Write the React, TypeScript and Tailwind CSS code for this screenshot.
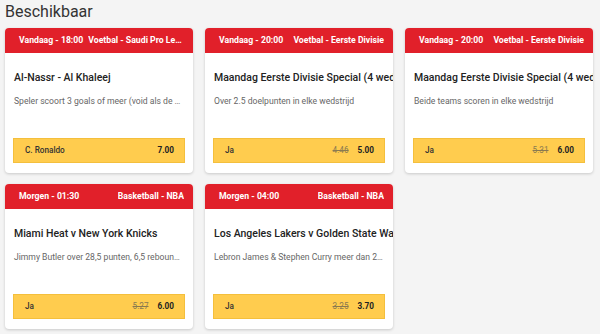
import React from "react";

type Card = {
  time: string;
  league: string;
  title: string;
  desc: string;
  label: string;
  old?: string;
  odds: string;
};

const cards: Card[] = [
  {
    time: "Vandaag - 18:00",
    league: "Voetbal - Saudi Pro League",
    title: "Al-Nassr - Al Khaleej",
    desc: "Speler scoort 3 goals of meer (void als de speler niet start)",
    label: "C. Ronaldo",
    odds: "7.00",
  },
  {
    time: "Vandaag - 20:00",
    league: "Voetbal - Eerste Divisie",
    title: "Maandag Eerste Divisie Special (4 wedstrijden)",
    desc: "Over 2.5 doelpunten in elke wedstrijd",
    label: "Ja",
    old: "4.46",
    odds: "5.00",
  },
  {
    time: "Vandaag - 20:00",
    league: "Voetbal - Eerste Divisie",
    title: "Maandag Eerste Divisie Special (4 wedstrijden)",
    desc: "Beide teams scoren in elke wedstrijd",
    label: "Ja",
    old: "5.31",
    odds: "6.00",
  },
  {
    time: "Morgen - 01:30",
    league: "Basketball - NBA",
    title: "Miami Heat v New York Knicks",
    desc: "Jimmy Butler over 28,5 punten, 6,5 rebounds en 4,5 assists",
    label: "Ja",
    old: "5.27",
    odds: "6.00",
  },
  {
    time: "Morgen - 04:00",
    league: "Basketball - NBA",
    title: "Los Angeles Lakers v Golden State Warriors",
    desc: "Lebron James & Stephen Curry meer dan 25 punten",
    label: "Ja",
    old: "3.25",
    odds: "3.70",
  },
];

function BetCard({ c }: { c: Card }) {
  return (
    <div className="flex h-[145px] flex-col overflow-hidden rounded-[4px] bg-white shadow-[0_1px_3px_rgba(0,0,0,0.18)]">
      <div className="flex h-[25px] shrink-0 items-center justify-between gap-[5px] bg-[#e1202a] pl-[14px] pr-[9px] text-[8.7px] font-bold text-white">
        <span className="shrink-0 whitespace-nowrap">{c.time}</span>
        <span className="min-w-0 truncate">{c.league}</span>
      </div>
      <div className="overflow-hidden whitespace-nowrap pl-[9px] pr-[5px] pt-[18px] text-[10.5px] font-medium leading-[14px] text-[#222]">
        {c.title}
      </div>
      <div className="truncate pl-[9px] pr-[9px] pt-[10px] text-[8.6px] leading-[12px] text-[#666]">
        {c.desc}
      </div>
      <div className="mx-[8px] mb-[10px] mt-auto flex h-[25px] items-center justify-between border border-[#f4bf3c] bg-[#ffcc4e] pl-[11px] pr-[10px] text-[8.2px] text-[#333]">
        <span className="font-medium">{c.label}</span>
        <span className="flex items-center gap-[9px]">
          {c.old && <span className="text-[#8a7a50] line-through">{c.old}</span>}
          <span className="font-bold text-[#222]">{c.odds}</span>
        </span>
      </div>
    </div>
  );
}

export default function App() {
  return (
    <div
      className="min-h-[334px] w-[600px] bg-[#f4f4f4] pl-[5px]"
      style={{ fontFamily: "Roboto, 'Liberation Sans', sans-serif" }}
    >
      <h1 className="text-[16px] leading-[24px] text-[#333]">Beschikbaar</h1>
      <div className="mt-[4px] grid grid-cols-[188px_188px_188px] gap-x-[12px] gap-y-[11px]">
        {cards.map((c, i) => (
          <BetCard key={i} c={c} />
        ))}
      </div>
    </div>
  );
}
